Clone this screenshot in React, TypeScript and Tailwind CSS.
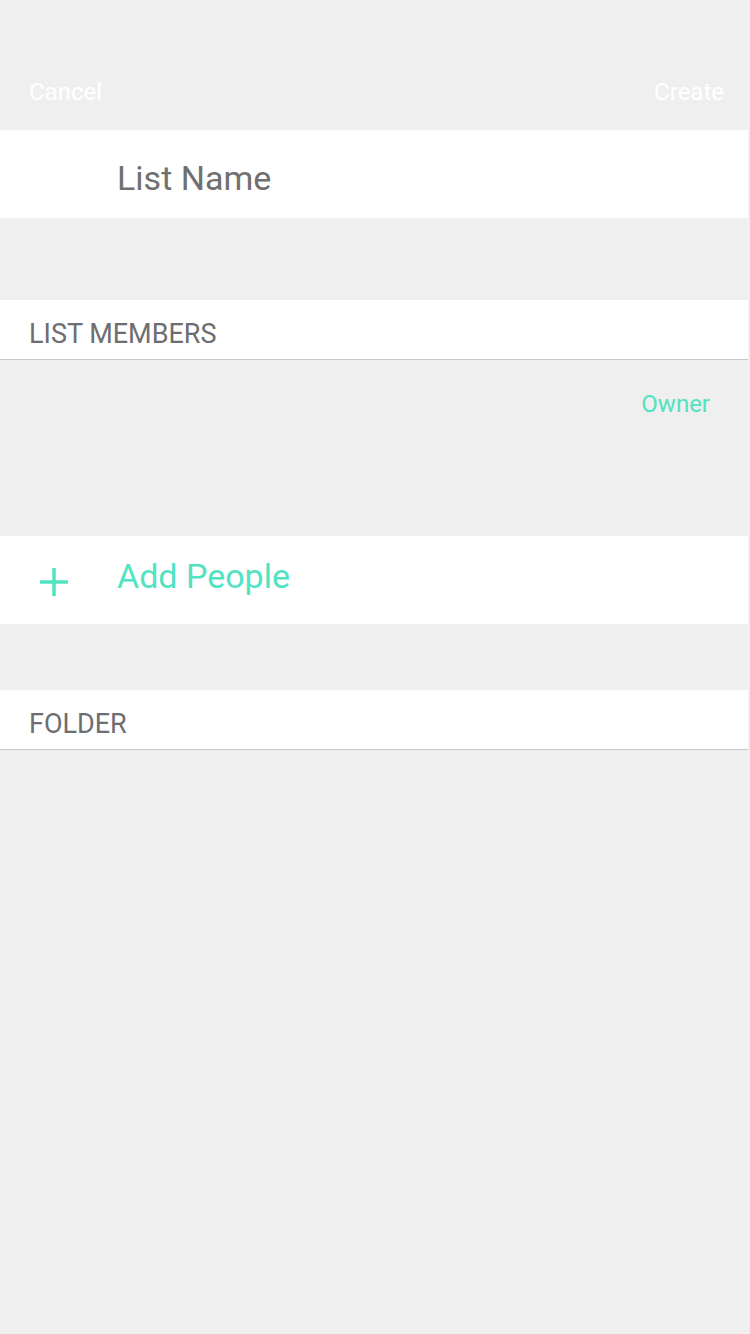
import React from "react";

export default function App() {
  return (
    <div
      className="w-[750px] h-[1334px] bg-[#efefef] flex flex-col"
      style={{ fontFamily: "Roboto, 'Noto Sans', sans-serif" }}
    >
      <div className="h-[130px] flex items-end justify-between pl-[29px] pr-[26px] pb-[22px]">
        <span className="text-[24px] leading-[32px] text-white">Cancel</span>
        <span className="text-[24px] leading-[32px] text-white">Create</span>
      </div>
      <div className="w-[748px] h-[88px] bg-white flex items-center pl-[117px]">
        <span className="text-[34px] text-[#707070] mt-[8px]">List Name</span>
      </div>
      <div className="h-[82px]" />
      <div className="w-[748px] h-[60px] bg-white border-b border-[#c8c7cc] flex items-center pl-[29px]">
        <span className="text-[27px] text-[#6d6d72] mt-[10px]">LIST MEMBERS</span>
      </div>
      <div className="h-[176px] flex justify-end pr-[40px] pt-[28px]">
        <span className="text-[24px] leading-[32px] text-[#50e3c2]">Owner</span>
      </div>
      <div className="w-[748px] h-[88px] bg-white flex items-center">
        <div className="w-[117px] flex pl-[40px]">
          <svg width="28" height="28" viewBox="0 0 28 28" className="mt-[4px]">
            <path d="M14 0V28M0 14H28" stroke="#50e3c2" strokeWidth="3.5" />
          </svg>
        </div>
        <span className="text-[34px] text-[#50e3c2] mb-[8px]">Add People</span>
      </div>
      <div className="h-[66px]" />
      <div className="w-[748px] h-[60px] bg-white border-b border-[#c8c7cc] flex items-center pl-[29px]">
        <span className="text-[27px] text-[#6d6d72] mt-[10px]">FOLDER</span>
      </div>
    </div>
  );
}
